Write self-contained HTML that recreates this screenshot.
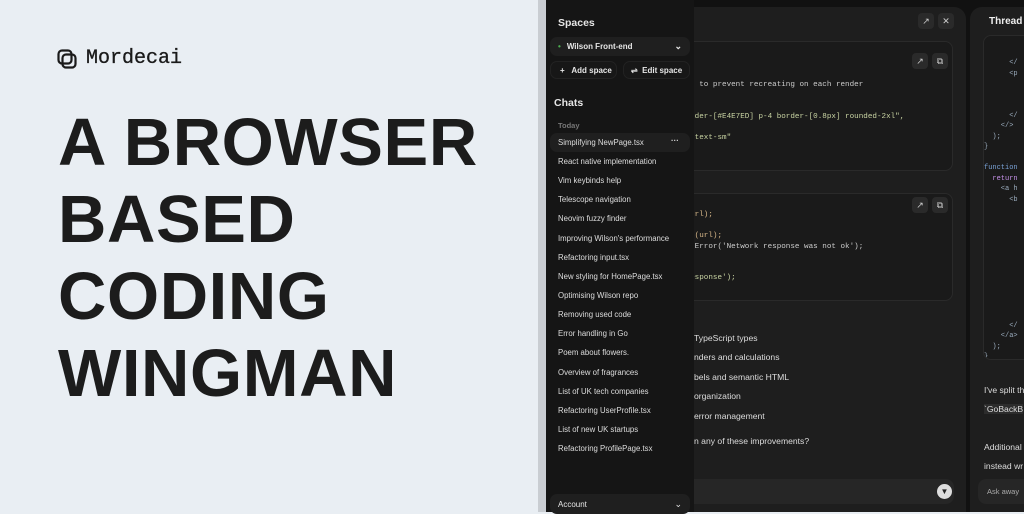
<!DOCTYPE html>
<html><head><meta charset="utf-8"><style>
*{margin:0;padding:0;box-sizing:border-box}
body{width:1024px;height:512px;overflow:hidden;position:relative;background:#e9eef3;font-family:"Liberation Sans",sans-serif}
.logo{position:absolute;left:57px;top:47px;display:flex;align-items:center;gap:9px;font-family:"Liberation Mono",monospace;font-size:20px;color:#1a1a1a}
.logo span{-webkit-text-stroke:0.3px #1a1a1a}
h1{position:absolute;left:58px;top:104px;font-size:67px;line-height:77px;font-weight:700;color:#1c1c1c;letter-spacing:0.6px}
.strip{position:absolute;left:538px;top:0;width:8px;height:512px;background:#c9cdd2}
.app{position:absolute;left:546px;top:0;width:478px;height:512px;background:#111}
.side{position:absolute;left:546px;top:0;width:148px;height:512px;background:#151515;color:#e6e6e6;font-size:8px}
.side .t{position:absolute;font-weight:700;font-size:10.5px}
.pill{position:absolute;background:#1f1f1f;border-radius:7px;font-weight:700;display:flex;align-items:center;white-space:nowrap}
.chat{position:absolute;left:12px;font-size:7.8px;color:#ddd;white-space:nowrap}
.main{position:absolute;left:694px;top:7px;width:272px;height:505px;background:#1e1e1e;border-radius:0 12px 0 0}
.right{position:absolute;left:970px;top:7px;width:60px;height:505px;background:#1e1e1e;border-radius:12px 0 0 0}
.code{position:absolute;background:#1a1a1a;border:1px solid #2a2a2a;border-radius:8px;font-family:"Liberation Mono",monospace;font-size:7.6px;color:#ccc;white-space:pre;overflow:hidden}
.btn{position:absolute;width:16px;height:16px;background:#2a2a2a;border-radius:4px;color:#ccc;font-size:9px;text-align:center;line-height:16px}
.li{position:absolute;left:0;font-size:8.6px;color:#ddd;white-space:nowrap}
</style></head><body>
<div class="logo"><svg width="20" height="20" viewBox="0 0 20 20" fill="none" stroke="#1a1a1a" stroke-width="2.2"><rect x="1.5" y="1.5" width="13" height="13" rx="3.5"/><rect x="5.5" y="5.5" width="13" height="13" rx="3.5"/></svg><span>Mordecai</span></div>
<h1>A BROWSER<br>BASED<br>CODING<br>WINGMAN</h1>
<div class="strip"></div>
<div class="app"></div>
<div class="main">
 <div class="btn" style="left:224px;top:6px">↗</div><div class="btn" style="left:244px;top:6px">✕</div>
 <div class="code" style="left:-14px;top:34px;width:273px;height:130px;padding:38px 0 0 0;line-height:10.5px"><span style="color:#ccc">ent to prevent recreating on each render</span>


<span style="color:#c9d4a3">border-[#E4E7ED] p-4 border-[0.8px] rounded-2xl",
2",
00 text-sm"</span></div>
 <div class="btn" style="left:218px;top:46px">↗</div><div class="btn" style="left:238px;top:46px">⧉</div>
 <div class="code" style="left:-14px;top:186px;width:273px;height:108px;padding:16px 0 0 0;line-height:10.5px"><span style="color:#d9b98a">h(url);</span>

<span style="color:#d9b98a">tch(url);</span>
<span>ew Error('Network response was not ok');</span>


<span style="color:#c9d4a3"> response');</span></div>
 <div class="btn" style="left:218px;top:190px">↗</div><div class="btn" style="left:238px;top:190px">⧉</div>
 <div style="position:absolute;left:0;top:326px">
  <div class="li" style="top:0">TypeScript types</div>
  <div class="li" style="top:19px">nders and calculations</div>
  <div class="li" style="top:39px">bels and semantic HTML</div>
  <div class="li" style="top:58px">organization</div>
  <div class="li" style="top:78px">error management</div>
  <div class="li" style="top:103px">n any of these improvements?</div>
 </div>
 <div style="position:absolute;left:-10px;top:472px;width:270px;height:25px;background:#262626;border-radius:8px"></div>
 <div style="position:absolute;left:243px;top:477px;width:15px;height:15px;border-radius:50%;background:#ddd;color:#222;font-size:8px;text-align:center;line-height:15px">▼</div>
</div>
<div class="right">
 <div style="position:absolute;left:19px;top:9px;font-size:10px;font-weight:700;color:#eee">Thread</div>
 <div class="code" style="left:13px;top:28px;width:60px;height:325px;padding:22px 0 0 0;line-height:10.5px;font-size:7px;color:#9ab"><span>      &lt;/
      &lt;p</span>



      &lt;/
    &lt;/&gt;
  );
}

<span style="color:#7aa2d6">function</span>
  <span style="color:#c792ea">return</span>
    &lt;a h
      &lt;b











      &lt;/
    &lt;/a&gt;
  );
}

 <span style="color:#c792ea">export d</span></div>
 <div style="position:absolute;left:14px;top:374px;font-size:8.6px;color:#ddd;line-height:19px;white-space:nowrap">I've split th<br><span style="background:#2c2c2c">`GoBackB</span><br><br>Additional<br>instead wr</div>
 <div style="position:absolute;left:8px;top:472px;width:60px;height:25px;background:#262626;border-radius:8px;font-size:7.5px;color:#aaa;padding:8px 0 0 9px;white-space:nowrap">Ask away</div>
</div>
<div class="side">
 <div class="t" style="left:12px;top:17px">Spaces</div>
 <div class="pill" style="left:4px;top:37px;width:140px;height:19px;padding-left:8px"><span style="color:#4caf50;margin-right:6px">•</span>Wilson Front-end<span style="position:absolute;right:8px;font-size:9px">⌄</span></div>
 <div class="pill" style="left:4px;top:61px;width:67px;height:18px;padding-left:9px;background:#171717;border:1px solid #222">+&nbsp;&nbsp;&nbsp;Add space</div>
 <div class="pill" style="left:77px;top:61px;width:67px;height:18px;padding-left:7px;background:#171717;border:1px solid #222">⇌&nbsp;&nbsp;Edit space</div>
 <div class="t" style="left:8px;top:97px">Chats</div>
 <div class="chat" style="top:121px;color:#777;font-size:7.5px;font-weight:700">Today</div>
 <div style="position:absolute;left:4px;top:133px;width:140px;height:19px;background:#1f1f1f;border-radius:7px"></div>
 <div class="chat" style="top:138px">Simplifying NewPage.tsx<span style="position:absolute;left:113px;top:-2px;font-weight:700">···</span></div>
 <div class="chat" style="top:157px">React native implementation</div>
 <div class="chat" style="top:176px">Vim keybinds help</div>
 <div class="chat" style="top:195px">Telescope navigation</div>
 <div class="chat" style="top:214px">Neovim fuzzy finder</div>
 <div class="chat" style="top:234px">Improving Wilson's performance</div>
 <div class="chat" style="top:253px">Refactoring input.tsx</div>
 <div class="chat" style="top:272px">New styling for HomePage.tsx</div>
 <div class="chat" style="top:291px">Optimising Wilson repo</div>
 <div class="chat" style="top:310px">Removing used code</div>
 <div class="chat" style="top:329px">Error handling in Go</div>
 <div class="chat" style="top:348px">Poem about flowers.</div>
 <div class="chat" style="top:368px">Overview of fragrances</div>
 <div class="chat" style="top:387px">List of UK tech companies</div>
 <div class="chat" style="top:406px">Refactoring UserProfile.tsx</div>
 <div class="chat" style="top:425px">List of new UK startups</div>
 <div class="chat" style="top:444px">Refactoring ProfilePage.tsx</div>
 <div class="pill" style="left:4px;top:494px;width:140px;height:20px;padding-left:8px;font-weight:400">Account<span style="position:absolute;right:8px;font-size:9px">⌄</span></div>
</div>
</body></html>
